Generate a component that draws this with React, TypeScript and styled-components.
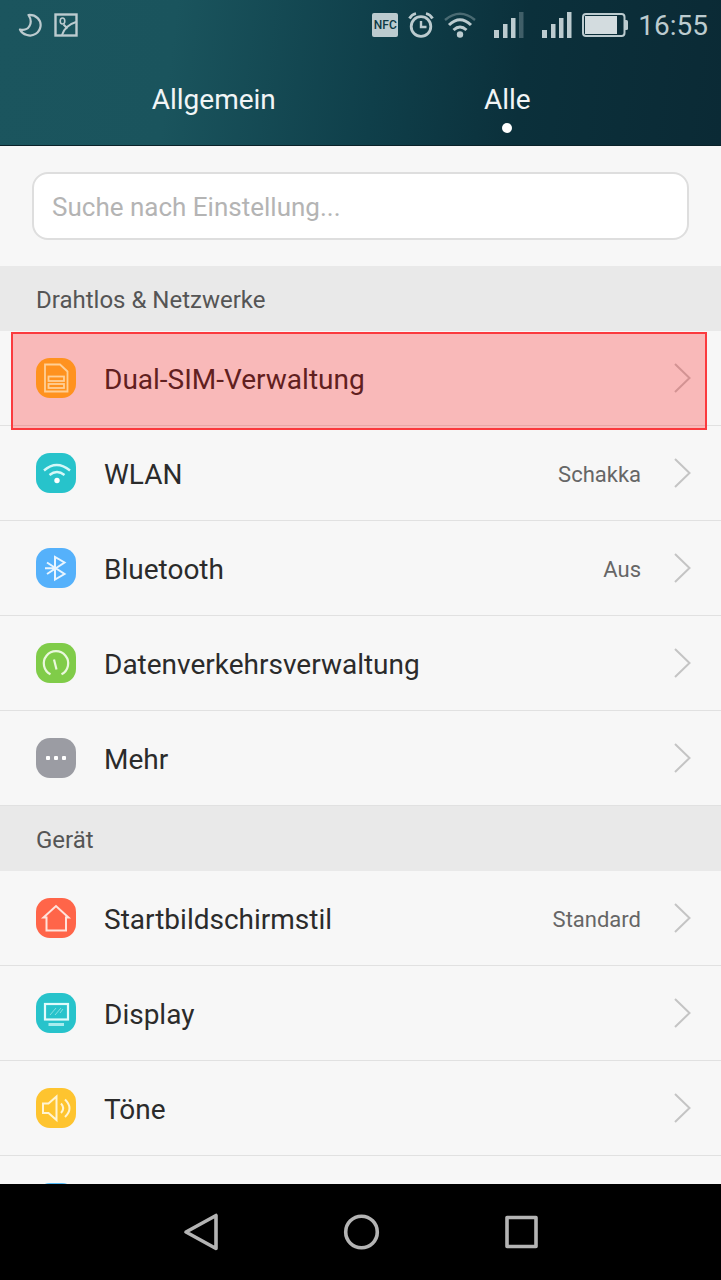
import React from "react";
import styled, { createGlobalStyle } from "styled-components";

const GlobalStyle = createGlobalStyle`
  * { box-sizing: border-box; }
  body {
    margin: 0;
    background: #f7f7f7;
    font-family: Roboto, "Noto Sans", sans-serif;
  }
  button, input { font: inherit; color: inherit; }
`;

const Screen = styled.div`
  display: flex;
  flex-direction: column;
  height: 100vh;
  overflow: hidden;
`;

const Header = styled.header`
  background: linear-gradient(97deg, #1b555e 0%, #1a545d 24%, #0f3f4a 52%, #0b303b 72%, #0b2a35 100%);
  color: #f1f5f6;
  border-bottom: 1px solid #0a2229;
`;

const StatusBar = styled.div`
  display: flex;
  align-items: center;
  justify-content: space-between;
  height: 50px;
  padding: 0 13px 0 18px;
  color: #bccbcf;
`;

const StatusGroup = styled.div<{ $gap: number }>`
  display: flex;
  align-items: center;
  gap: ${(p) => p.$gap}px;

  svg { display: block; }
`;

const NfcBadge = styled.span`
  width: 26px;
  height: 24px;
  border-radius: 2px;
  background: #bccbcf;
  color: #0d3944;
  font-size: 12px;
  font-weight: 500;
  line-height: 24px;
  text-align: center;
`;

const Clock = styled.time`
  font-size: 28px;
  line-height: 32px;
  padding-top: 2px;
`;

const Tabs = styled.nav`
  display: flex;
  height: 95px;
  padding: 0 67px;
`;

const Tab = styled.button<{ $active?: boolean }>`
  flex: 1;
  display: flex;
  flex-direction: column;
  align-items: center;
  gap: 7px;
  padding: 34px 0 0;
  border: 0;
  background: none;
  font-size: 28px;
  line-height: 32px;

  &::after {
    content: "";
    width: 10px;
    height: 10px;
    border-radius: 50%;
    background: ${(p) => (p.$active ? "#ffffff" : "transparent")};
  }
`;

const Content = styled.main`
  flex: 1;
  min-height: 0;
  overflow-y: auto;
  scrollbar-width: none;
`;

const SearchArea = styled.div`
  padding: 26px 32px;
`;

const SearchInput = styled.input`
  display: block;
  width: 100%;
  height: 68px;
  padding: 2px 18px 0;
  border: 2px solid #dedede;
  border-radius: 16px;
  background: #ffffff;
  font-size: 26px;
  color: #333333;

  &::placeholder { color: #b4b4b4; opacity: 1; }
`;

const SectionTitle = styled.h2`
  margin: 0;
  padding: 18px 36px 15px;
  background: #e9e9e9;
  color: #555555;
  font-size: 24px;
  font-weight: 400;
  line-height: 32px;
`;

const List = styled.ul`
  margin: 0;
  padding: 0;
  list-style: none;
`;

const Row = styled.button<{ $marked?: boolean }>`
  position: relative;
  display: flex;
  align-items: center;
  width: 100%;
  height: 95px;
  padding: 0 30px 0 36px;
  border: 0;
  border-bottom: 1px solid #e1e1e1;
  background: #f7f7f7;
  color: #2b2b2b;
  text-align: left;

  ${(p) =>
    p.$marked &&
    `
    z-index: 1;
    &::after {
      content: "";
      position: absolute;
      inset: 1px 14px -5px 11px;
      border: 2px solid #fb3a3e;
      background: rgba(255, 0, 0, 0.25);
    }
  `}
`;

const Tile = styled.span<{ $color: string }>`
  position: relative;
  z-index: 1;
  flex: none;
  width: 40px;
  height: 40px;
  margin-right: 28px;
  border-radius: 14px;
  background: ${(p) => p.$color};

  svg { display: block; }
`;

const Label = styled.span`
  flex: 1;
  padding-top: 4px;
  font-size: 28px;
  line-height: 32px;
`;

const Value = styled.span`
  margin-right: 33px;
  padding-top: 4px;
  color: #666666;
  font-size: 22px;
  line-height: 32px;
`;

const NavBar = styled.footer`
  flex: none;
  display: flex;
  justify-content: center;
  height: 96px;
  background: #000000;
`;

const NavButton = styled.button`
  display: grid;
  place-items: center;
  width: 160px;
  border: 0;
  background: none;
  color: #b4b4b4;
`;

const Chevron = () => (
  <svg width="17" height="30" viewBox="0 0 17 30" fill="none" stroke="#c4c4c4" strokeWidth="2">
    <path d="M1 1 L15.500 15 L1 29" />
  </svg>
);

const Glyph = ({ children }: { children: React.ReactNode }) => (
  <svg width="40" height="40" viewBox="0 0 40 40" fill="none" stroke="#fff" strokeWidth="2">
    {children}
  </svg>
);

const SimGlyph = () => (
  <Glyph>
    <g stroke="#ffcf96" strokeWidth="1.800">
      <path d="M9 6.500h15l7.500 7v20H9z" />
      <rect x="12.500" y="18.500" width="15.500" height="4.500" />
      <rect x="12.500" y="26" width="15.500" height="4" />
    </g>
  </Glyph>
);

const WifiGlyph = () => (
  <Glyph>
    <path d="M8 17.500q12.500-11 26 0" stroke="#d5f8f8" strokeWidth="2.400" />
    <path d="M13.500 22q7.500-6 15 0" stroke="#d5f8f8" strokeWidth="2.400" />
    <circle cx="21" cy="27.500" r="2.700" fill="#fff" stroke="none" />
  </Glyph>
);

const BluetoothGlyph = () => (
  <Glyph>
    <path d="M11 14.500L28.500 26L19 31.500V9l9.500 5.500L11 26M9 20.300h10" stroke="#e8f5ff" />
  </Glyph>
);

const GaugeGlyph = () => (
  <Glyph>
    <path d="M14.500 31.300A12.200 12.200 0 1 1 25.500 31.300" strokeWidth="2.200" stroke="#eaf8dd" />
    <path d="M18 16.500l2.500 10" strokeWidth="2.200" stroke="#eaf8dd" />
  </Glyph>
);

const MoreGlyph = () => (
  <Glyph>
    <g fill="#fff" stroke="none">
      <rect x="10" y="18" width="4" height="4" rx="1" />
      <rect x="18" y="18" width="4" height="4" rx="1" />
      <rect x="26" y="18" width="4" height="4" rx="1" />
    </g>
  </Glyph>
);

const HomeGlyph = () => (
  <Glyph>
    <path d="M7.500 19.500L20 8l12.500 11.500H30V32.500H10.500V19.500z" stroke="#ffe3dc" />
  </Glyph>
);

const DisplayGlyph = () => (
  <Glyph>
    <rect x="9" y="11" width="23" height="15.500" stroke="#e0fbfb" strokeWidth="2.200" />
    <path d="M14 22l6-7M19 22l6-7M24 20l3-4" stroke="#86e0e2" strokeWidth="1" />
    <path d="M12.500 31.500h15.500" stroke="#a8ecee" strokeWidth="3" />
  </Glyph>
);

const SoundGlyph = () => (
  <Glyph>
    <path d="M7 15.500h5.500L20.500 8.500v23.500l-8-7H7z" stroke="#fff4d2" />
    <path d="M25 15.500q4.500 4.700 0 9.500M29 11.500q9 8.700 0 17.500" stroke="#fff4d2" />
  </Glyph>
);

const MoonIcon = () => (
  <svg width="24" height="24" viewBox="0 0 24 24" fill="none" stroke="currentColor" strokeWidth="2.200" strokeLinejoin="round">
    <path d="M10.500 2C18 1.500 23.500 7 22.500 13.500C21.500 20 15 24 9 22C5.500 21 3 19 2 16.500C6 17.500 10 16 11.500 13C13.500 9.500 12.500 5 10.500 2z" />
  </svg>
);

const PictureIcon = () => (
  <svg width="24" height="24" viewBox="0 0 24 24" fill="none" stroke="currentColor" strokeWidth="2.400">
    <rect x="1.500" y="1.500" width="21" height="21" />
    <ellipse cx="8.500" cy="8" rx="2.300" ry="3" strokeWidth="1.600" />
    <path d="M8 22Q11 12.500 22 9M9.500 11.500l4 4" strokeWidth="2" />
  </svg>
);

const AlarmIcon = () => (
  <svg width="26" height="26" viewBox="0 0 26 26" fill="none" stroke="currentColor">
    <circle cx="13" cy="14.500" r="9.800" strokeWidth="2.800" />
    <path d="M13 9v6h5.500" strokeWidth="2.400" />
    <path d="M1.500 6.500Q3.500 2.500 8 1.500M24.500 6.500Q22.500 2.500 18 1.500" strokeWidth="2.800" />
  </svg>
);

const StatusWifiIcon = () => (
  <svg width="32" height="26" viewBox="0 0 32 26" fill="none" stroke="currentColor" strokeWidth="3">
    <path d="M1 8Q16-4.500 31 8" opacity=".35" strokeWidth="2.400" />
    <path d="M5 13Q16 2.500 27 13" />
    <path d="M9.500 18Q16 12 22.500 18" />
    <circle cx="16" cy="22.500" r="3.200" fill="currentColor" stroke="none" />
  </svg>
);

const SignalIcon = ({ faded }: { faded?: boolean }) => (
  <svg width="30" height="26" viewBox="0 0 30 26" fill="currentColor">
    <rect x="0" y="18" width="5" height="8" />
    <rect x="9" y="12" width="4.500" height="14" />
    <rect x="17" y="6" width="4.500" height="20" />
    <rect x="25" y="0" width="4.500" height="26" opacity={faded ? 0.3 : 1} />
  </svg>
);

const BatteryIcon = () => (
  <svg width="46" height="24" viewBox="0 0 46 24">
    <rect x="1" y="1" width="41.500" height="22" rx="3" fill="none" stroke="currentColor" strokeWidth="2" />
    <rect x="3" y="3" width="32" height="18" fill="#d3dcdf" />
    <path d="M43 7h1.500q1.500 0 1.500 1.500v7q0 1.500-1.500 1.500H43z" fill="currentColor" />
  </svg>
);

const NavShape = ({ children }: { children: React.ReactNode }) => (
  <svg width="38" height="38" viewBox="0 0 38 38" fill="none" stroke="currentColor" strokeWidth="3.600" strokeLinejoin="round">
    {children}
  </svg>
);

type Item = {
  label?: string;
  value?: string;
  color: string;
  glyph?: React.ReactNode;
  marked?: boolean;
};

const network: Item[] = [
  { label: "Dual-SIM-Verwaltung", color: "#ff921f", glyph: <SimGlyph />, marked: true },
  { label: "WLAN", value: "Schakka", color: "#27c3cb", glyph: <WifiGlyph /> },
  { label: "Bluetooth", value: "Aus", color: "#55b1fb", glyph: <BluetoothGlyph /> },
  { label: "Datenverkehrsverwaltung", color: "#80cc49", glyph: <GaugeGlyph /> },
  { label: "Mehr", color: "#9b9ca3", glyph: <MoreGlyph /> },
];

const device: Item[] = [
  { label: "Startbildschirmstil", value: "Standard", color: "#ff6549", glyph: <HomeGlyph /> },
  { label: "Display", color: "#27c3cb", glyph: <DisplayGlyph /> },
  { label: "Töne", color: "#fec42f", glyph: <SoundGlyph /> },
  { color: "#4fb8f5" },
];

const Section = ({ title, items }: { title: string; items: Item[] }) => (
  <section>
    <SectionTitle>{title}</SectionTitle>
    <List>
      {items.map((item, i) => (
        <li key={i}>
          <Row type="button" $marked={item.marked}>
            <Tile $color={item.color}>{item.glyph}</Tile>
            <Label>{item.label}</Label>
            {item.value && <Value>{item.value}</Value>}
            <Chevron />
          </Row>
        </li>
      ))}
    </List>
  </section>
);

export default function App() {
  return (
    <Screen>
      <GlobalStyle />
      <Header>
        <StatusBar>
          <StatusGroup $gap={12}>
            <MoonIcon />
            <PictureIcon />
          </StatusGroup>
          <StatusGroup $gap={10}>
            <StatusGroup $gap={18}>
              <StatusGroup $gap={10}>
                <NfcBadge>NFC</NfcBadge>
                <AlarmIcon />
                <StatusWifiIcon />
              </StatusGroup>
              <SignalIcon faded />
              <SignalIcon />
            </StatusGroup>
            <BatteryIcon />
            <Clock>16:55</Clock>
          </StatusGroup>
        </StatusBar>
        <Tabs>
          <Tab type="button">Allgemein</Tab>
          <Tab type="button" $active>Alle</Tab>
        </Tabs>
      </Header>
      <Content>
        <SearchArea>
          <SearchInput type="search" aria-label="Suche nach Einstellung..." placeholder="Suche nach Einstellung..." />
        </SearchArea>
        <Section title="Drahtlos &amp; Netzwerke" items={network} />
        <Section title="Gerät" items={device} />
      </Content>
      <NavBar>
        <NavButton type="button">
          <NavShape><path d="M4 19L34 2.500V35.500z" /></NavShape>
        </NavButton>
        <NavButton type="button">
          <NavShape><circle cx="19.500" cy="19" r="15.800" /></NavShape>
        </NavButton>
        <NavButton type="button">
          <NavShape><rect x="5" y="4.500" width="29" height="29" /></NavShape>
        </NavButton>
      </NavBar>
    </Screen>
  );
}
